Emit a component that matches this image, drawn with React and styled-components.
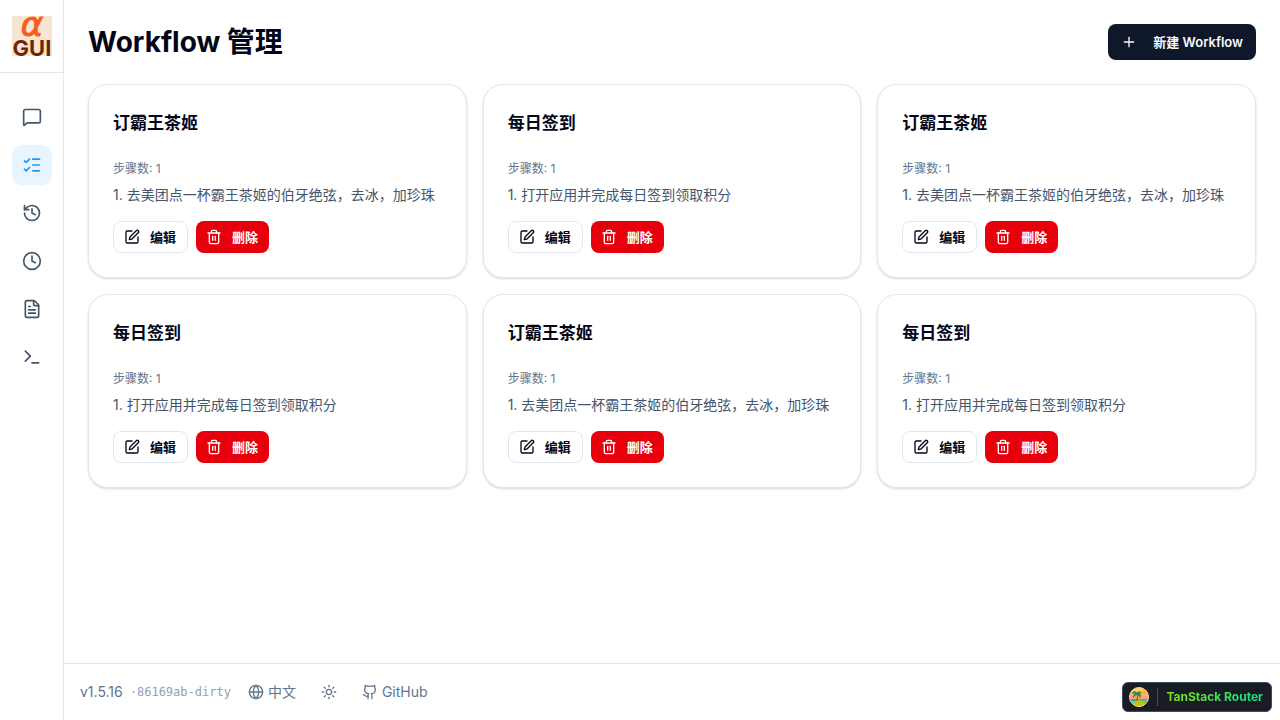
import React from 'react';
import styled, { createGlobalStyle } from 'styled-components';
import {
  Clock,
  FileText,
  Github,
  Globe,
  History,
  ListChecks,
  MessageSquare,
  Plus,
  SquarePen,
  Sun,
  Terminal,
  Trash2,
} from 'lucide-react';

const GlobalStyle = createGlobalStyle`
  *, *::before, *::after { box-sizing: border-box; }
  body {
    margin: 0;
    background: #fff;
    color: #020618;
    font-family: Inter, "Noto Sans CJK SC", sans-serif;
    font-size: 14px;
    line-height: 20px;
  }
  button { font: inherit; cursor: pointer; }
  h1, h2, p, ol { margin: 0; }
  svg { flex-shrink: 0; }
`;

const Shell = styled.div`
  display: flex;
  min-height: 100vh;
`;

const Sidebar = styled.aside`
  flex: 0 0 64px;
  border-right: 1px solid #e2e8f0;
`;

const LogoBox = styled.div`
  display: flex;
  justify-content: center;
  padding: 16px 0;
  border-bottom: 1px solid #e2e8f0;

  svg {
    display: block;
    overflow: visible;
  }
`;

const LogoAlpha = styled.text`
  fill: #f75e1d;
  font-family: "DejaVu Sans", sans-serif;
  font-size: 34px;
  font-style: italic;
  stroke: #f75e1d;
  text-anchor: middle;
`;

const LogoName = styled.text`
  fill: #712506;
  font-family: Inter, sans-serif;
  font-size: 22px;
  font-weight: 700;
  text-anchor: middle;
`;

const Nav = styled.nav`
  display: flex;
  flex-direction: column;
  align-items: center;
  gap: 8px;
  padding: 24px 0;
`;

const NavButton = styled.button`
  display: flex;
  align-items: center;
  justify-content: center;
  width: 40px;
  height: 40px;
  padding: 0;
  border: none;
  border-radius: 10px;
  background: ${({ $active }) => ($active ? '#e8f5fe' : 'transparent')};
  color: ${({ $active }) => ($active ? '#1d9bf0' : '#45556c')};
`;

const Content = styled.div`
  display: flex;
  flex: 1;
  flex-direction: column;
  min-width: 0;
`;

const Main = styled.main`
  flex: 1;
  padding: 24px;
`;

const Header = styled.header`
  display: flex;
  align-items: center;
  justify-content: space-between;
  margin-bottom: 24px;
`;

const Title = styled.h1`
  font-size: 28px;
  font-weight: 700;
  line-height: 36px;
`;

const CreateButton = styled.button`
  display: flex;
  align-items: center;
  gap: 16px;
  height: 36px;
  padding: 0 13px;
  border: none;
  border-radius: 8px;
  background: #0f172b;
  color: #f8fafc;
  font-size: 13px;
  font-weight: 600;
`;

const Grid = styled.div`
  display: grid;
  grid-template-columns: repeat(3, minmax(0, 1fr));
  gap: 16px;
`;

const Card = styled.article`
  padding: 24px;
  border: 1px solid #e2e8f0;
  border-radius: 20px;
  background: #fff;
  box-shadow: 0 1px 3px rgba(15, 23, 43, 0.1), 0 1px 2px rgba(15, 23, 43, 0.06);
`;

const CardTitle = styled.h2`
  margin-bottom: 24px;
  font-size: 17px;
  font-weight: 600;
  line-height: 28px;
`;

const StepCount = styled.p`
  margin-bottom: 8px;
  color: #62748e;
  font-size: 12px;
  line-height: 16px;
`;

const Step = styled.p`
  margin-bottom: 16px;
  overflow: hidden;
  color: #45556c;
  text-overflow: ellipsis;
  white-space: nowrap;
`;

const Actions = styled.div`
  display: flex;
  gap: 8px;
`;

const ActionButton = styled.button`
  display: flex;
  align-items: center;
  gap: 10px;
  height: 32px;
  padding: 0 11px 0 10px;
  border: ${({ $danger }) => ($danger ? 'none' : '1px solid #e2e8f0')};
  border-radius: 8px;
  background: ${({ $danger }) => ($danger ? '#e7000b' : '#fff')};
  color: ${({ $danger }) => ($danger ? '#fff' : '#020618')};
  font-size: 13px;
  font-weight: 600;
`;

const Footer = styled.footer`
  display: flex;
  align-items: center;
  height: 57px;
  padding: 0 16px;
  border-top: 1px solid #e2e8f0;
  color: #62748e;
`;

const Commit = styled.span`
  margin: 0 17px 0 7px;
  color: #90a1b9;
  font-family: "DejaVu Sans Mono", monospace;
  font-size: 12px;
`;

const FooterButton = styled.button`
  display: flex;
  align-items: center;
  gap: 4px;
  margin-right: 25px;
  padding: 0;
  border: none;
  background: none;
  color: inherit;
`;

const FooterLink = styled.a`
  display: flex;
  align-items: center;
  gap: 4px;
  color: inherit;
  text-decoration: none;
`;

const RouterBadge = styled.button`
  position: fixed;
  right: 8px;
  bottom: 8px;
  display: flex;
  align-items: center;
  gap: 8px;
  height: 30px;
  padding: 0 8px 0 6px;
  border: 1px solid #414962;
  border-radius: 6px;
  background: #191c24;
  font-size: 12px;
  font-weight: 700;
  line-height: 16px;
`;

const BadgeDivider = styled.span`
  width: 1px;
  height: 18px;
  background: #414962;
`;

const BadgeText = styled.span`
  background: linear-gradient(to right, #84e619, #10e68c);
  background-clip: text;
  color: transparent;
`;

function Logo() {
  return (
    <svg width="40" height="40" viewBox="0 0 40 40" role="img" aria-label="α GUI">
      <rect width="40" height="40" fill="#f7e5d3" />
      <LogoAlpha x="20" y="20">α</LogoAlpha>
      <LogoName x="20" y="40">GUI</LogoName>
    </svg>
  );
}

function IslandIcon() {
  return (
    <svg width="20" height="20" viewBox="0 0 20 20" aria-hidden="true">
      <defs>
        <linearGradient id="sky" x1="0" y1="0" x2="0" y2="1">
          <stop offset="0" stopColor="#ffe06b" />
          <stop offset="0.650" stopColor="#ff9078" />
        </linearGradient>
        <clipPath id="disc">
          <circle cx="10" cy="10" r="9.500" />
        </clipPath>
      </defs>
      <g clipPath="url(#disc)">
        <path d="M0 0H20V20H0Z" fill="url(#sky)" />
        <circle cx="15.500" cy="4.800" r="2.200" fill="#ffac22" />
        <path d="M0 12.500H20V20H0Z" fill="#129ca5" />
        <path d="M0 14.500H6M14 14H20" stroke="#77ded2" />
        <ellipse cx="10" cy="17" rx="6.500" ry="4" fill="#b6c70a" />
        <path d="M8 6.500Q9 9 8 13.500" fill="none" stroke="#79451c" />
        <path
          d="M8 6Q5 3 3 6.500Q5.500 5.500 7.500 6.500Q4 6.500 4.500 10.500Q5.500 8 8 7.500Q10.500 8 11 10.500Q13 7 9 6.500Q11 5.500 12.500 6.500Q11 3 8 6Z"
          fill="#22883e"
          stroke="#22883e"
          strokeWidth="0.500"
        />
      </g>
      <circle cx="10" cy="10" r="9.500" fill="none" stroke="#f6d98c" />
    </svg>
  );
}

const navItems = [
  { label: '聊天', icon: MessageSquare },
  { label: 'Workflow', icon: ListChecks, active: true },
  { label: '历史', icon: History },
  { label: '定时任务', icon: Clock },
  { label: '日志', icon: FileText },
  { label: '终端', icon: Terminal },
];

const tea = { name: '订霸王茶姬', steps: ['去美团点一杯霸王茶姬的伯牙绝弦，去冰，加珍珠'] };
const checkin = { name: '每日签到', steps: ['打开应用并完成每日签到领取积分'] };
const workflows = [tea, checkin, tea, checkin, tea, checkin].map((w, i) => ({ ...w, id: i + 1 }));

function WorkflowCard({ workflow }) {
  return (
    <Card>
      <CardTitle>{workflow.name}</CardTitle>
      <StepCount>步骤数: {workflow.steps.length}</StepCount>
      {workflow.steps.map((step, i) => (
        <Step key={step}>
          {i + 1}. {step}
        </Step>
      ))}
      <Actions>
        <ActionButton type="button">
          <SquarePen size={16} />
          编辑
        </ActionButton>
        <ActionButton type="button" $danger>
          <Trash2 size={16} />
          删除
        </ActionButton>
      </Actions>
    </Card>
  );
}

export default function App() {
  return (
    <>
      <GlobalStyle />
      <Shell>
        <Sidebar>
          <LogoBox>
            <Logo />
          </LogoBox>
          <Nav>
            {navItems.map(({ label, icon: Icon, active }) => (
              <NavButton key={label} type="button" aria-label={label} $active={active}>
                <Icon size={20} />
              </NavButton>
            ))}
          </Nav>
        </Sidebar>
        <Content>
          <Main>
            <Header>
              <Title>Workflow 管理</Title>
              <CreateButton type="button">
                <Plus size={16} />
                新建 Workflow
              </CreateButton>
            </Header>
            <Grid>
              {workflows.map(w => (
                <WorkflowCard key={w.id} workflow={w} />
              ))}
            </Grid>
          </Main>
          <Footer>
            <span>v1.5.16</span>
            <Commit>·86169ab-dirty</Commit>
            <FooterButton type="button">
              <Globe size={16} />
              中文
            </FooterButton>
            <FooterButton type="button" aria-label="主题">
              <Sun size={16} />
            </FooterButton>
            <FooterLink href="#github">
              <Github size={16} />
              GitHub
            </FooterLink>
          </Footer>
        </Content>
      </Shell>
      <RouterBadge type="button">
        <IslandIcon />
        <BadgeDivider />
        <BadgeText>TanStack Router</BadgeText>
      </RouterBadge>
    </>
  );
}
